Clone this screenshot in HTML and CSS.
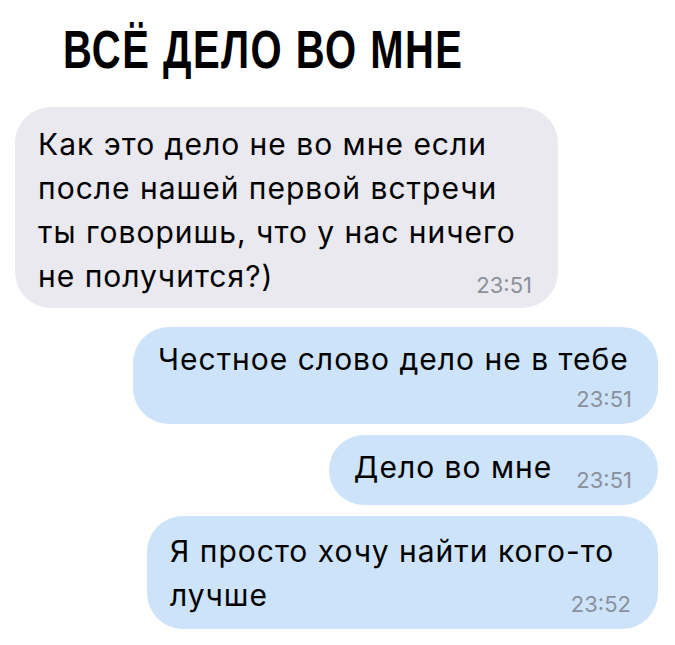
FILE: index.html
```html
<!DOCTYPE html>
<html lang="ru">
<head>
<meta charset="UTF-8" />
<meta name="viewport" content="width=device-width, initial-scale=1" />
<title>Всё дело во мне</title>
<link rel="stylesheet" href="styles.css">
</head>
<body>

<h1 class="title"><span class="title-text">ВСЁ ДЕЛО ВО МНЕ</span></h1>

<div class="chat">
  <div class="bubble bubble--in">
    <p class="text">Как это дело не во мне если после нашей первой встречи ты говоришь, что у нас ничего не получится?)<span class="time">23:51</span></p>
  </div>

  <div class="bubble bubble--out bubble--wrap">
    <p class="text">Честное слово дело не в тебе<span class="time">23:51</span></p>
  </div>

  <div class="bubble bubble--out bubble--single">
    <p class="text">Дело во мне<span class="time">23:51</span></p>
  </div>

  <div class="bubble bubble--out bubble--two">
    <p class="text">Я просто хочу найти кого-то лучше<span class="time">23:52</span></p>
  </div>
</div>

</body>
</html>
```

FILE: styles.css
```css
* {
  box-sizing: border-box;
}
body {
  margin: 0;
  background: #ffffff;
  color: #000000;
  font-family: Inter, Roboto, "Noto Sans", sans-serif;
}

.title {
  margin: 0;
  padding: 19px 0 0 63px;
  font-family: "Liberation Sans", Arial, sans-serif;
  font-weight: 700;
  font-size: 54px;
  line-height: 60px;
}
/* the original heading is set in a condensed bold face */
.title-text {
  display: inline-block;
  letter-spacing: 2px;
  transform: scaleX(0.74);
  transform-origin: left center;
}

.chat {
  display: flex;
  flex-direction: column;
  align-items: flex-start;
  gap: 11px;
  padding: 28px 17px 0 15px;
}

.bubble {
  display: flow-root;
  border-radius: 36px;
  padding: 15px 26px 8px 23px;
}
.bubble--in {
  background: #e9e9ef;
  max-width: 543px;
  margin-bottom: 8px;
}
.bubble--out {
  align-self: flex-end;
  background: #cce3fa;
  max-width: 525px;
  padding: 10px 26px 10px 25px;
}
.bubble--two {
  max-width: 511px;
  padding: 13px 27px 10px 23px;
}

.text {
  margin: 0;
  font-size: 30px;
  line-height: 44px;
  letter-spacing: 1px;
}

.time {
  float: right;
  margin: 18px 0 2px 24px;
  font-size: 22px;
  line-height: 26px;
  letter-spacing: 0;
  color: #8b909a;
}
.bubble--wrap .time {
  margin-top: 5px;
}
.bubble--single .time {
  margin-top: 22px;
}
```
